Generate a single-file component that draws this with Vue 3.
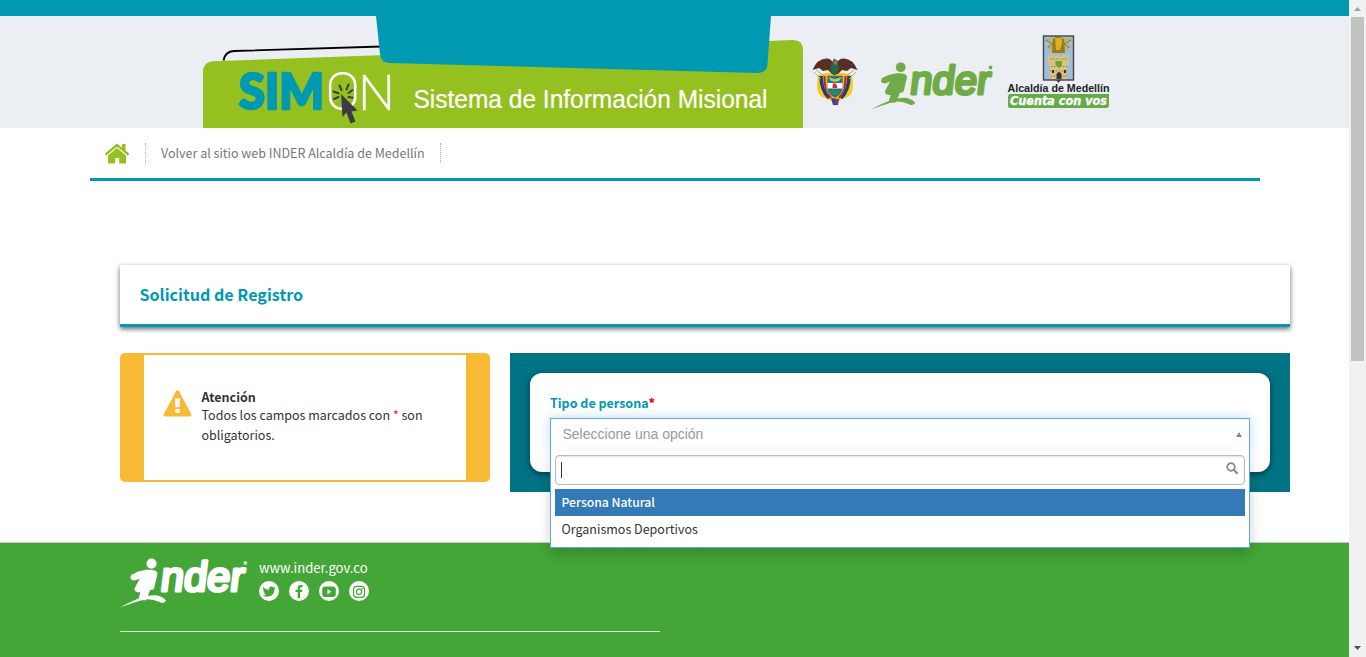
<script setup>
const options = ['Persona Natural', 'Organismos Deportivos']
const selected = 0
</script>

<template>
  <div class="screen">
    <div class="page">
      <header>
        <div class="topbar"></div>
        <div class="banner">
          <svg class="folder" width="600" height="112" viewBox="203 16 600 112">
            <path d="M203 128V72Q203 62 213 61.3L793 40Q803 40 803 50V128Z" fill="#94c11f" />
            <path d="M223.500 60.500Q225 51.500 234 51L382 46.500" fill="none" stroke="#000" stroke-width="1.800" />
            <path d="M376 16L380 54Q381 62.700 389 63L757 73Q767 73 767.500 64L771 16Z" fill="#0099b2" />
            <text class="sim" x="239" y="108.500" textLength="85" lengthAdjust="spacingAndGlyphs">SIM</text>
            <rect x="330.200" y="73.200" width="25" height="35.500" rx="11.500" fill="none" stroke="#fff" stroke-width="2.500" />
            <text class="on" x="358" y="109.500" textLength="37" lengthAdjust="spacingAndGlyphs">N</text>
            <path d="M334 99l4.500-2M333.500 91.500l5 1.800M339.500 85.500l2 4.500M346.500 89.500l2-5M348.500 93l4-3M348.500 97l4 .8" fill="none" stroke="#3c3c49" stroke-width="2" stroke-linecap="round" />
            <path d="M341 94L342.500 117L346.500 112.500L350.500 123.500L355.500 121.500L351.500 111.500L357.500 110.500Z" fill="#3c3c49" />
            <text class="slogan" x="413.500" y="107.500" textLength="354" lengthAdjust="spacingAndGlyphs">Sistema de Información Misional</text>
          </svg>
          <svg class="crest" width="46" height="50" viewBox="812 57 46 50">
            <path d="M818 75Q815 93 822 97Q827 98 831 101H839Q843 98 848 97Q855 93 852 75L844 73H826Z" fill="#f9cb12" />
            <path d="M821 76Q821 90 829 98M849 76Q849 90 841 98" stroke="#173f87" stroke-width="3.500" fill="none" />
            <path d="M824.500 76Q824 90 831 98M845.500 76Q846 90 839 98" stroke="#c72431" stroke-width="2.200" fill="none" />
            <path d="M814 72L821 79M856 72L849 79M816 70L824 76M854 70L846 76" stroke="#aaa" stroke-width="1" />
            <path d="M812.500 70Q817 59 826 58.500Q831 58 833 63H837Q839 58 844 58.500Q853 59 857.500 70L851 68L847 71L842 70L838 74H832L828 70L823 71L819 68Z" fill="#573024" />
            <path d="M832 62L834 58.500L838 61L839 69L836 75H833L830 69Z" fill="#27664a" />
            <path d="M833 60L837 61V65L834 64Z" fill="#c96058" />
            <path d="M827 75.500H843V89Q842 95 835 98Q828 95 827 89Z" fill="#1b7595" stroke="#d5ac32" />
            <path d="M827.500 83H842.500V88.500H827.500Z" fill="#fff" />
            <path d="M833 83.500H836L837.500 88H832.500Z" fill="#df2430" />
            <path d="M828 77L835 79L842 77L839 81L835 82L831 81Z" fill="#d6ba40" />
            <path d="M829 91Q835 89 841 91L838 95H832Z" fill="#31875a" />
            <path d="M831 98L839 99L838 105H833Z" fill="#234d97" /><path d="M835 99H838L837 103L835 106Z" fill="#cc2634" />
          </svg>
          <svg class="inder top" width="124" height="52" viewBox="0 0 124 52">
            <g fill="currentColor">
              <circle cx="29.700" cy="6.300" r="4.900" />
              <path d="M11 17Q17 13.500 25 12.300Q36 11.500 36 16L32.800 30Q31.500 32.500 29 31.500L26 39.500L24.500 41.500H17.500L19.500 34Q13 34 14 30L19 20.800L14 22.500Q8 22 11 17Z" />
              <path d="M-.3 48.600Q13 41.500 22 38.500Q33 35.500 39 38Q43 39.500 44.200 42Q41.500 45.500 38 43.200Q30 39.500 22 41Q12 44 -.3 48.600Z" />
              <circle cx="119.500" cy="6.500" r="1.900" />
            </g>
            <text transform="translate(38 32.500) skewX(-7)" textLength="80" lengthAdjust="spacingAndGlyphs">nder</text>
          </svg>
          <svg class="mayor" width="104" height="76" viewBox="1007 34 104 76">
            <rect x="1043.500" y="36" width="30" height="44" fill="#9fbed8" stroke="#444" stroke-width="1.400" />
            <path d="M1056 80L1058.500 83L1061 80" fill="#444" />
            <path d="M1045 39L1053 37V47L1050 52L1046 46L1049 45ZM1072 39L1064 37V47L1067 52L1071 46L1068 45Z" fill="#b7b381" />
            <path d="M1046 40L1053 44L1047 48M1071 40L1064 44L1070 48" fill="none" stroke="#686447" stroke-dasharray="2 1" />
            <path d="M1053 39Q1058 34 1064 39L1065 53H1052Z" fill="#9a7b17" />
            <path d="M1055 38H1062V44L1060 50H1056Z" fill="#d8b11f" />
            <path d="M1048 55L1051 57L1053 54L1056 57L1058.500 54L1061 57L1064 54L1066 57L1069 55V64L1067 66V79H1050V66L1048 64Z" fill="#dac17f" />
            <path d="M1050 59H1068M1051 66.500H1067M1050 71H1067M1051 76H1067" stroke="#947e51" stroke-dasharray="1.500 1.500" />
            <path d="M1055.500 61H1062V65L1059 68L1055.500 65Z" fill="#61a63c" /><path d="M1056.500 79V74Q1059 70 1061.500 74V79ZM1052 70H1054V73H1052ZM1064 70H1066V73H1064Z" fill="#343332" />
            <text class="city" x="1007.500" y="92" textLength="102" lengthAdjust="spacingAndGlyphs">Alcaldía de Medellín</text>
            <path d="M1008 97Q1008 94 1011 94H1109V105Q1109 108 1106 108H1010Q1008 108 1008 106Z" fill="#65aa45" />
            <text class="vos" x="1010" y="105" textLength="97" lengthAdjust="spacingAndGlyphs">Cuenta con vos</text>
          </svg>
        </div>
      </header>

      <nav>
        <a class="home"><svg width="26" height="22" viewBox="1 0 26 22"><path d="M18 1H21.500V8L18 5Z M4 12.500L13 5L22 12.500V20.500H15.200V15H11.200V20.500H4Z" fill="#94c11f" /><path d="M1.500 11.500L13 2L24.500 11.500" fill="none" stroke="#94c11f" stroke-width="2.300" /></svg></a>
        <a class="back"><span>Volver al sitio web INDER Alcaldía de Medellín</span></a>
      </nav>

      <main>
        <section class="heading"><h1>Solicitud de Registro</h1></section>
        <div class="columns">
          <aside>
            <svg width="29" height="27" viewBox="0 0 29 27"><path d="M13 1.200Q14.500-.8 16 1.200L28.200 24Q29 26.500 26.500 26.500H2.500Q0 26.500.8 24Z" fill="#f8b935" /><path d="M11.800 8.500H17.200L16.500 17.300H12.500ZM12.300 19H16.700V23H12.300Z" fill="#fff" /></svg>
            <div class="notice">
              <strong>Atención</strong>
              <p>Todos los campos marcados con <i>*</i> son obligatorios.</p>
            </div>
          </aside>
          <section class="panel">
            <div class="form">
              <label>Tipo de persona<b>*</b></label>
              <div class="select">
                <div class="value"><span>Seleccione una opción</span><svg width="6" height="5" viewBox="0 0 6 5"><path d="M3 0L6 5H0Z" fill="#888" /></svg></div>
                <div class="drop">
                  <div class="search"><span class="caret"></span><svg width="13" height="13" viewBox="0 0 13 13"><circle cx="5" cy="5" r="3.800" fill="none" stroke="#888" stroke-width="1.700" /><path d="M7.700 7.700L11.700 11.700" stroke="#888" stroke-width="2.300" /></svg></div>
                  <ul><li v-for="(option, i) in options" :key="option" :class="{ active: i === selected }"><span>{{ option }}</span></li></ul>
                </div>
              </div>
            </div>
          </section>
        </div>
      </main>

      <footer>
        <div class="brand">
          <svg class="inder" width="129" height="52" viewBox="0 0 124 50">
            <g fill="currentColor">
              <circle cx="30.300" cy="6.300" r="4.900" />
              <path d="M11 17Q17 13.500 25 12.300Q36 11.500 36 16L32.800 30Q31.500 32.500 29 31.500L26 39.500L24.500 41.500H17.500L19.500 34Q13 34 14 30L19 20.800L14 22.500Q8 22 11 17Z" />
              <path d="M-.3 48.600Q13 41.500 22 38.500Q33 35.500 39 38Q43 39.500 44.200 42Q41.500 45.500 38 43.200Q30 39.500 22 41Q12 44 -.3 48.600Z" />
              <circle cx="120.500" cy="5.800" r="1.900" opacity=".7" />
            </g>
            <text transform="translate(38 32.500) skewX(-7)" textLength="80" lengthAdjust="spacingAndGlyphs">nder</text>
          </svg>
          <div class="contact">
            <span class="site">www.inder.gov.co</span>
            <div class="social">
              <svg viewBox="0 0 20 20"><circle cx="10" cy="10" r="10" /><path class="ink" d="M4 6Q7 9 10 9Q9.500 6 12 5.500Q13.500 5.300 14.500 6.500L16.500 6L15.500 8Q15.500 14.500 9.500 15.500Q6 16 3.500 14.500Q6 14.500 7 13.500Q5 13 4.500 11.500H6Q4 10.500 4 8.500L5 9Q3.500 7.500 4 6Z" /></svg>
              <svg viewBox="0 0 20 20"><circle cx="10" cy="10" r="10" /><path class="ink" d="M8.700 17V11H6.500V8.700H8.700V7Q8.700 4 11.300 4H13.500V6.200H12Q11 6.200 11 7.500V8.700H13.500L13 11H11V17Z" /></svg>
              <svg viewBox="0 0 20 20"><circle cx="10" cy="10" r="10" /><rect class="ink" x="3.200" y="5.500" width="13.600" height="10.500" rx="3" /><path d="M8.500 8L12.300 10.700L8.500 13.400Z" /></svg>
              <svg viewBox="0 0 20 20"><circle cx="10" cy="10" r="10" /><g class="line"><rect x="4.500" y="5.300" width="11" height="11" rx="3" /><circle cx="10" cy="10.800" r="2.700" /></g><circle class="ink" cx="13.200" cy="7.700" r=".8" /></svg>
            </div>
          </div>
        </div>
        <hr>
      </footer>
    </div>
    <div class="scrollbar">
      <svg width="17" height="17" viewBox="0 0 17 17"><path d="M8.500 7L12 11H5Z" fill="#a3a3a3" /></svg>
      <div class="thumb"></div>
      <svg class="down" width="17" height="17" viewBox="0 0 17 17"><path d="M5 6H12L8.500 10Z" fill="#505050" /></svg>
    </div>
  </div>
</template>

<style>
body { overflow: hidden; background: #fff; }
</style>
<style scoped>
* { box-sizing: border-box; }
.screen { width: 1366px; height: 657px; display: flex; overflow: hidden; font: 12.5px/20px "Noto Sans CJK SC", "Open Sans", sans-serif; color: #333; }
.page { width: 1349px; height: 657px; display: flex; flex-direction: column; }
svg { display: block; flex: none; }
header { flex: none; }
.topbar { height: 16px; background: #0099b2; }
.banner { height: 112px; background: #ebeef3; display: flex; padding-left: 203px; }
.sim { font: 900 49px Lato, sans-serif; fill: #0099b2; stroke: #0099b2; stroke-width: 2.6; stroke-linejoin: round; }
.on { font: 300 50px Lato, sans-serif; fill: #fff; stroke: #fff; stroke-width: .4; }
.slogan { font: 25px "Liberation Sans", Arial, sans-serif; fill: #fff; stroke: #fff; stroke-width: .2; }
.crest { margin: 41px 0 0 9px; }
.inder { color: #fff; overflow: visible; }
.inder.top { margin: 45px 0 0 13px; color: #6fac48; }
.inder text { font: 400 40px "Liberation Sans", Arial, sans-serif; fill: currentColor; stroke: currentColor; stroke-width: 3.1; stroke-linejoin: round; stroke-linecap: round; }
.mayor { margin: 18px 0 0 12px; overflow: visible; }
.city { font: bold 11px "Liberation Sans", Arial, sans-serif; fill: #222; }
.vos { font: italic bold 12px "DejaVu Sans", sans-serif; fill: #fff; stroke: #fff; stroke-width: .3; }
nav { flex: none; width: 1170px; height: 53px; margin-left: 90px; border-bottom: 3px solid #0099b2; display: flex; align-items: flex-start; padding: 15px 0 0 15px; }
.home { width: 41px; height: 20px; border-right: 1px dotted #aaa; }
.back { width: 295px; height: 20px; padding: 0 15px; border-right: 1px dotted #aaa; color: #777; }
.back span { white-space: nowrap; }
main { flex: none; height: 361px; padding: 84px 0 0 120px; }
.heading { width: 1170px; height: 62px; border-bottom: 3px solid #0099b2; box-shadow: 0 2px 5px rgba(0,0,0,.6); padding: 19px 19.5px; }
h1 { margin: 0; font-size: 16.100px; line-height: 20px; color: #0099b2; }
.columns { display: flex; gap: 20px; margin-top: 26px; align-items: flex-start; }
aside { width: 370px; height: 129px; border: solid #f8b935; border-width: 2px 24px; border-radius: 5px; display: flex; padding: 35px 20px 0 19px; gap: 9.5px; }
.notice { width: 240px; margin-top: -1px; }
.notice strong { display: block; line-height: 16px; }
p { margin: 0; }
i { color: #d5153c; font-style: normal; }
.panel { width: 780px; height: 139px; background: #007385; padding: 20px; }
.form { width: 740px; height: 99px; border-radius: 12px; background: #fff; padding: 20px; box-shadow: 0 2px 6px rgba(0,0,0,.5); }
label { display: block; height: 25px; color: #0099b2; font-weight: bold; }
label b { color: red; }
.select { position: relative; z-index: 1; width: 700px; height: 34px; border: 1px solid #5fa9e2; border-bottom: 0; background: #fff; box-shadow: 0 0 10px rgba(102,175,233,.45); }
.value { height: 33px; display: flex; align-items: center; justify-content: space-between; padding: 0 7px 2px 11.500px; font: 14px "Liberation Sans", Arial, sans-serif; color: #999; }
.value span { margin-top: -2px; }
.drop { position: absolute; left: -1px; top: 32px; width: 700px; height: 97px; border: 1px solid #5fa9e2; border-top: 0; background: #fff; box-shadow: 0 6px 12px rgba(0,0,0,.18); padding: 4px; }
.search { height: 30px; border: 1px solid #bbb; border-radius: 4px; padding: 5px 5px 5px 5px; display: flex; justify-content: space-between; box-shadow: inset 0 1px 2px rgba(0,0,0,.12); }
.search svg { margin-top: 1px; }
.caret { width: 1px; height: 16px; margin-top: 1px; background: #333; }
ul { list-style: none; margin: 4px 0 0; padding: 0; }
li { height: 27px; padding: 3px 6.500px; }
li.active { background: #337ab7; color: #fff; font-weight: 500; font-size: 12.2px; }
footer { height: 115px; background: #43a636; border-top: 1px solid #c8cdd0; padding: 15px 120px 0; }
.brand { display: flex; gap: 10px; height: 73px; }
.brand .inder { margin-top: -1px; }
.contact { color: #fff; }
.site { display: block; height: 23px; font-size: 13.1px; line-height: 20px; }
.social { display: flex; gap: 10px; }
.social svg { width: 20px; height: 20px; fill: #fff; }
.ink { fill: #43a636; }
.line { fill: none; stroke: #43a636; stroke-width: 1.2; }
hr { width: 540px; height: 1px; margin: 0; border: 0; background: #e5f2e2; }
.scrollbar { width: 17px; height: 657px; background: #f1f1f1; display: flex; flex-direction: column; }
.thumb { width: 13px; height: 344px; margin-left: 2px; background: #c1c1c1; }
.down { margin-top: auto; }
</style>
